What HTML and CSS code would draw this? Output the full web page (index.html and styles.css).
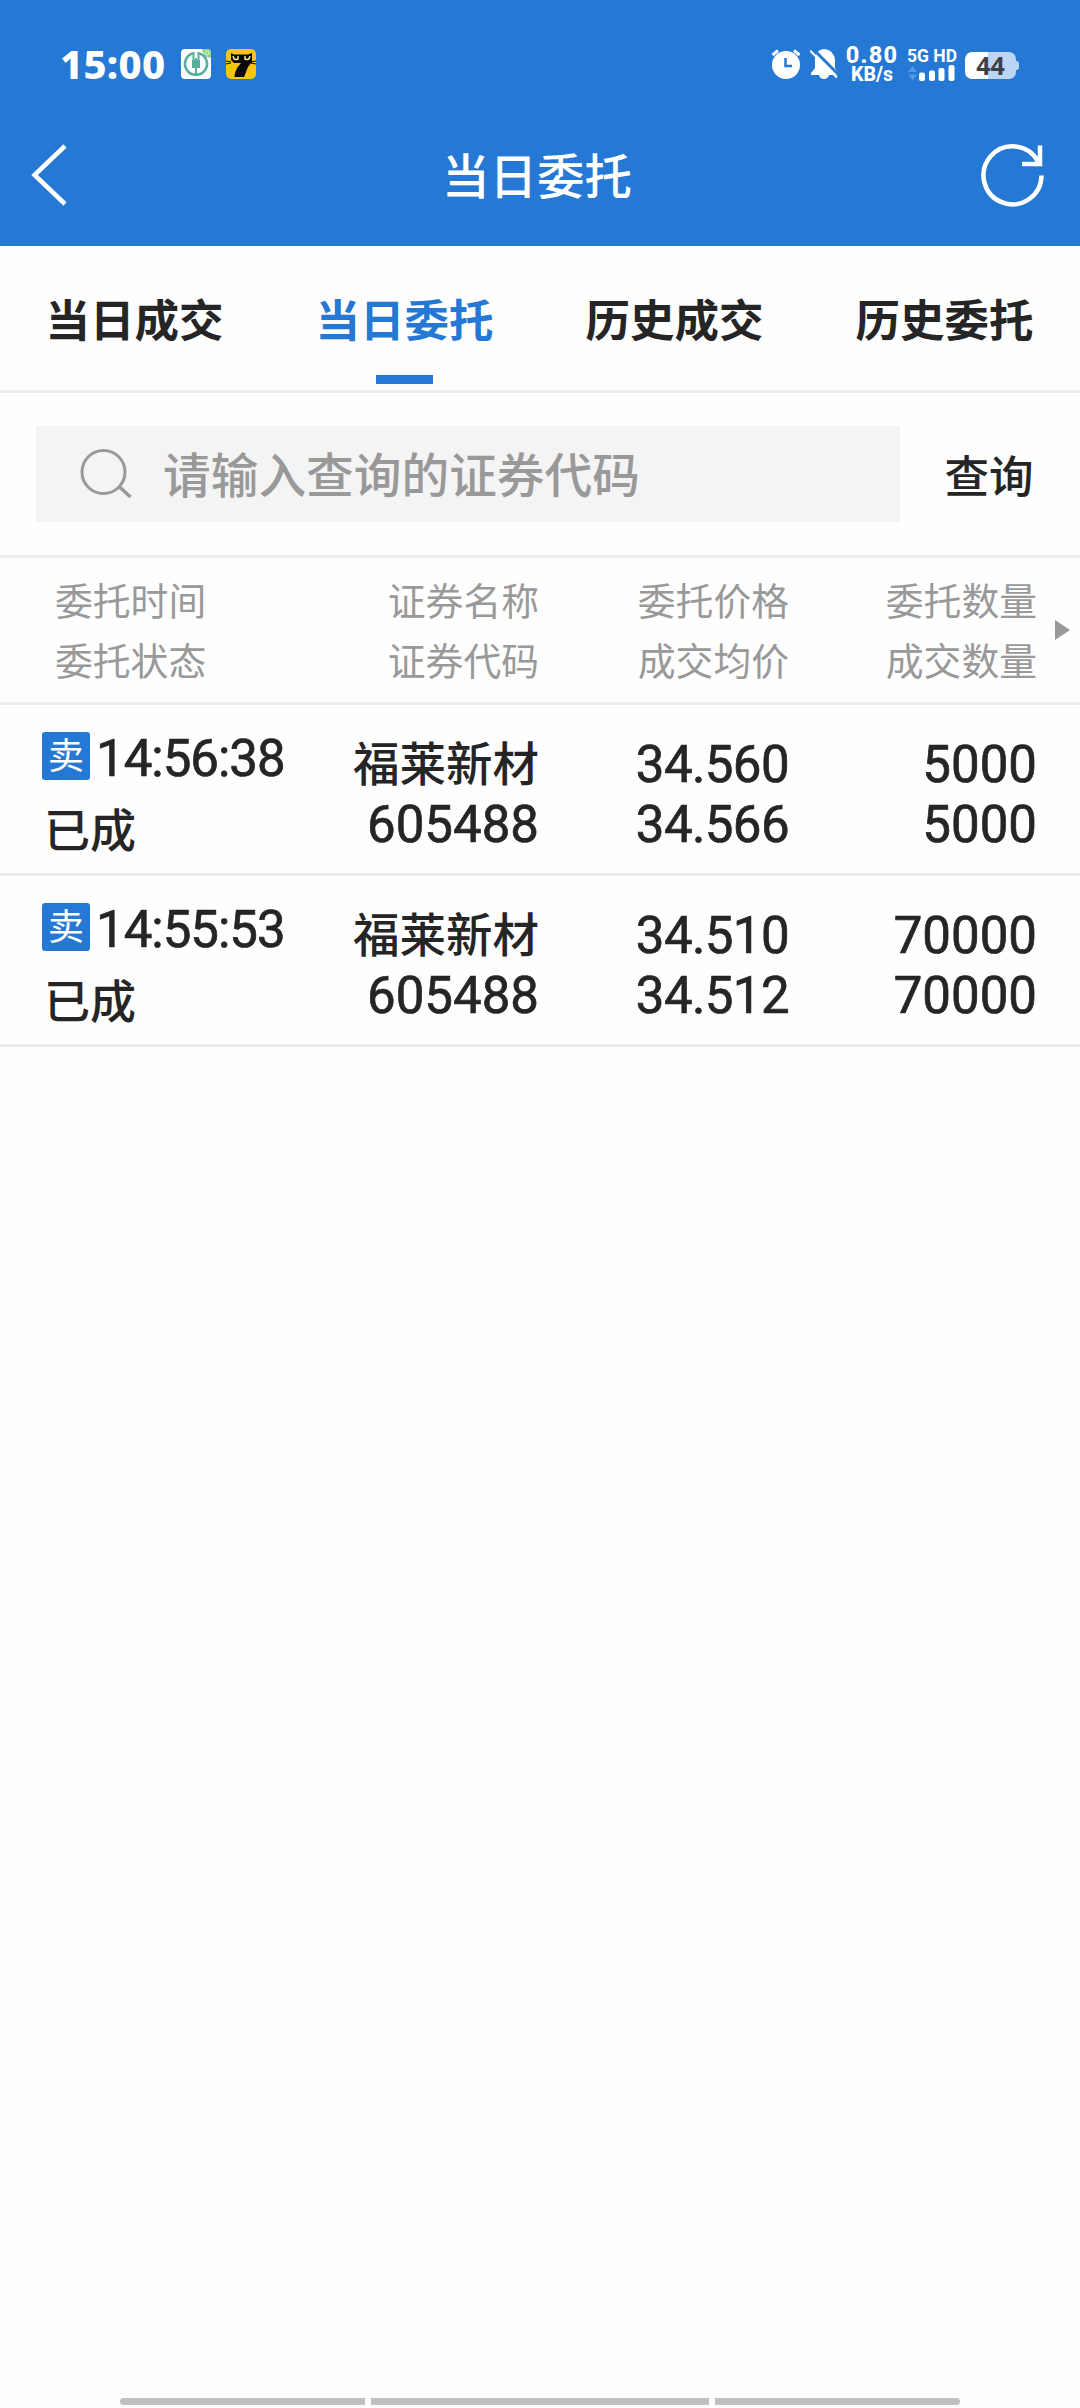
FILE: index.html
```html
<!DOCTYPE html>
<html lang="zh-CN">
<head>
  <meta charset="UTF-8">
  <meta name="viewport" content="width=device-width, initial-scale=1">
  <title>当日委托</title>
  <link rel="stylesheet" href="styles.css">
</head>
<body>

  <header class="header">
    <div class="status-bar">
      <span class="clock">15:00</span>
      <svg class="app-icon" width="30" height="30" viewBox="0 0 30 30">
        <rect width="30" height="30" rx="4" fill="#fff"/>
        <path d="M21 0h5a4 4 0 0 1 4 4v5a9 9 0 0 1-9-9z" fill="#8fd28a"/>
        <circle cx="26" cy="4" r="2" fill="none" stroke="#d8f5b0" stroke-width="1"/>
        <path d="M12 4.300A11 11 0 1 0 18 4.300" fill="none" stroke="#55b09c" stroke-width="2.600"/>
        <path d="M12.500 3v8M17.500 3v8M15 9v18" fill="none" stroke="#55b09c" stroke-width="2"/>
        <rect x="11" y="11" width="8" height="8" fill="#55b09c"/>
      </svg>
      <svg class="app-icon" width="30" height="30" viewBox="0 0 30 30">
        <rect width="30" height="30" rx="5" fill="#f8c70c"/>
        <path d="M5 4l3 1.500h14L26 4v9l-4 5-4 10H8.500q0-7 6.500-14H8l-3-3z" fill="#080808"/>
        <path d="M0 12l5 1M0 15l5-1M30 12l-5 1M30 15l-5-1" stroke="#080808" stroke-width="1"/>
        <path d="M7 7q1 5 5 3V7M24 7q-1 5-5 3V7" fill="none" stroke="#f8e48a" stroke-width="1.500"/>
      </svg>

      <div class="status-right">
        <svg class="alarm" width="30" height="30" viewBox="0 0 30 30">
          <circle cx="15" cy="16" r="14" fill="#fff"/>
          <path d="M1.500 6L7 1.500M28.500 6L23 1.500" stroke="#fff" stroke-width="3"/>
          <path d="M14.500 9v8h6.500" fill="none" stroke="#2578d4" stroke-width="2.500"/>
        </svg>
        <svg class="bell" width="28" height="30" viewBox="0 0 28 30">
          <path d="M5 10q0-9 9-10 10 1 11 11v8l3 5v2h-9q-1 4-5 4t-5-4H1v-2l4-5z" fill="#fff"/>
          <path d="M2 -1L29 26" stroke="#2578d4" stroke-width="3"/>
          <path d="M0 1.500L27 28.500" stroke="#fff" stroke-width="2"/>
        </svg>
        <div class="net-speed">
          <span class="net-value">0.80</span>
          <span class="net-unit">KB/s</span>
        </div>
        <div class="signal">
          <span class="signal-type">5G HD</span>
          <svg width="48" height="16" viewBox="0 0 48 16">
            <path d="M1 7l4.500-6L10 7zM1 9.500h9L5.500 15.500z" fill="#5597e2"/>
            <rect x="12" y="7.500" width="6" height="8.500" rx="2" fill="#fff"/>
            <rect x="22" y="5.500" width="6" height="10.500" rx="2" fill="#fff"/>
            <rect x="31.500" y="3" width="6" height="13" rx="2" fill="#fff"/>
            <rect x="41.500" y="0" width="6" height="16" rx="2" fill="#fff"/>
          </svg>
        </div>
        <div class="battery"><span class="battery-level">44</span></div>
      </div>
    </div>

    <div class="title-bar">
      <svg class="back" width="36" height="62" viewBox="0 0 36 62">
        <path d="M34 2L3.500 31L34 60" fill="none" stroke="#fff" stroke-width="4.500"/>
      </svg>
      <h1 class="title">当日委托</h1>
      <svg class="refresh" width="64" height="64" viewBox="0 0 64 64">
        <path d="M60.500 32.500A29 29 0 1 1 57 18.500" fill="none" stroke="#fff" stroke-width="4.500"/>
        <path d="M59 2.500v18.500H41" fill="none" stroke="#fff" stroke-width="4.500"/>
      </svg>
    </div>
  </header>

  <nav class="tabs">
    <a class="tab">当日成交</a>
    <a class="tab active">当日委托</a>
    <a class="tab">历史成交</a>
    <a class="tab">历史委托</a>
  </nav>

  <div class="search">
    <div class="search-box">
      <svg width="54" height="54" viewBox="0 0 54 54">
        <circle cx="24.500" cy="25" r="21.500" fill="none" stroke="#999" stroke-width="3"/>
        <path d="M40 39.500L51.500 50" stroke="#999" stroke-width="3.500"/>
      </svg>
      <span class="placeholder">请输入查询的证券代码</span>
    </div>
    <span class="search-btn">查询</span>
  </div>

  <div class="orders">
    <div class="order-head">
      <div class="cell first">委托时间<br>委托状态</div>
      <div class="cell">证券名称<br>证券代码</div>
      <div class="cell">委托价格<br>成交均价</div>
      <div class="cell">委托数量<br>成交数量</div>
      <svg class="more" width="15" height="20" viewBox="0 0 15 20">
        <path d="M0 0L15 10L0 20z" fill="#999"/>
      </svg>
    </div>

    <div class="order-row">
      <div class="cell first">
        <div class="time"><span class="sell">卖</span><span class="num">14:56:38</span></div>
        <div class="state">已成</div>
      </div>
      <div class="cell"><span class="name">福莱新材</span><span class="num">605488</span></div>
      <div class="cell amount price"><span class="num">34.560</span><span class="num">34.566</span></div>
      <div class="cell amount"><span class="num">5000</span><span class="num">5000</span></div>
    </div>

    <div class="order-row">
      <div class="cell first">
        <div class="time"><span class="sell">卖</span><span class="num">14:55:53</span></div>
        <div class="state">已成</div>
      </div>
      <div class="cell"><span class="name">福莱新材</span><span class="num">605488</span></div>
      <div class="cell amount price"><span class="num">34.510</span><span class="num">34.512</span></div>
      <div class="cell amount"><span class="num">70000</span><span class="num">70000</span></div>
    </div>
  </div>

  <footer class="nav-hint">
    <i class="hint left"></i>
    <i class="hint middle"></i>
    <i class="hint right"></i>
  </footer>

</body>
</html>
```
FILE: styles.css
```css
* {
  box-sizing: border-box;
}

body {
  margin: 0;
  height: 2408px;
  display: flex;
  flex-direction: column;
  background: #fefefe;
  color: #252525;
  font-family: "Noto Sans", "Noto Sans CJK SC", sans-serif;
  font-weight: 500;
  overflow: hidden;
}

svg {
  display: block;
  flex: none;
}

/* header */
.header {
  height: 246px;
  background: #2578d4;
  color: #fff;
}

.status-bar {
  display: flex;
  align-items: center;
  height: 105px;
  padding: 23px 60px 0 60px;
}

.clock {
  width: 121px;
  font-size: 40px;
  font-weight: 800;
  line-height: 40px;
  letter-spacing: 0.3px;
}

.app-icon {
  margin-right: 15px;
}

.status-right {
  display: flex;
  align-items: center;
  margin-left: auto;
}

.bell {
  margin-left: 9px;
}

.net-speed {
  display: flex;
  flex-direction: column;
  align-items: center;
  width: 54px;
  margin-left: 7px;
  font-family: Roboto, sans-serif;
  font-weight: 800;
}

.net-value {
  font-size: 23.5px;
  line-height: 20px;
  letter-spacing: 1.2px;
}

.net-unit {
  font-size: 19.5px;
  line-height: 19px;
}

.signal {
  width: 48px;
  margin-left: 8px;
}

.signal-type {
  display: block;
  font-family: Roboto, sans-serif;
  font-size: 17.5px;
  font-weight: 700;
  line-height: 18px;
  white-space: nowrap;
}

.battery {
  position: relative;
  width: 51px;
  height: 27px;
  margin: 2px 4px 0 10px;
  border-radius: 7px;
  background: linear-gradient(90deg, #fff 23px, #bcd5f5 23px);
  color: #3d4045;
  text-align: center;
}

.battery::after {
  content: "";
  position: absolute;
  right: -3px;
  top: 9px;
  width: 3px;
  height: 9px;
  border-radius: 0 3px 3px 0;
  background: #bcd5f5;
}

.battery-level {
  display: block;
  font-size: 25px;
  font-weight: 700;
  line-height: 27px;
}

.title-bar {
  display: flex;
  align-items: center;
  justify-content: space-between;
  height: 141px;
  padding: 0 35px 1px 31px;
}

.title {
  margin: 0;
  padding: 2px 2px 0 0;
  font-size: 47.5px;
  font-weight: 500;
  line-height: 60px;
}

.back {
  margin-right: 28px;
}

/* tabs */
.tabs {
  display: flex;
  height: 147px;
  border-bottom: 3px solid #eee;
}

.tab {
  flex: 1;
  display: flex;
  flex-direction: column;
  align-items: center;
  padding: 19px 1px 0 0;
  font-size: 44.5px;
  font-weight: 700;
  line-height: 110px;
}

.tab.active {
  color: #2578d4;
}

.tab.active::after {
  content: "";
  width: 57px;
  height: 9px;
  background: #2578d4;
}

/* search */
.search {
  display: flex;
  align-items: center;
  height: 165px;
  padding-left: 36px;
  border-bottom: 3px solid #eee;
}

.search-box {
  display: flex;
  align-items: center;
  width: 864px;
  height: 96px;
  padding-left: 43px;
  background: #f4f4f4;
}

.placeholder {
  margin-left: 30px;
  padding-top: 2px;
  color: #999;
  font-size: 47.7px;
  line-height: 94px;
}

.search-btn {
  flex: 1;
  padding: 3px 2px 0 0;
  font-size: 44.5px;
  line-height: 93px;
  text-align: center;
}

/* orders */
.order-head,
.order-row {
  display: grid;
  grid-template-columns: 290px 249px 250px 248px 43px;
  border-bottom: 3px solid #eee;
}

.cell {
  text-align: right;
}

.cell.first {
  text-align: left;
}

.order-head {
  height: 147px;
  padding-top: 13px;
  color: #999;
  font-size: 37.8px;
  font-weight: 400;
  line-height: 60px;
}

.order-head .first {
  padding-left: 55px;
}

.more {
  margin: 49px 0 0 18px;
}

.order-row {
  height: 171px;
  padding-top: 27px;
  line-height: 60px;
}

.order-row .cell span {
  display: block;
}

.order-row .first {
  padding-left: 42px;
}

.order-row .num {
  font-family: Roboto, sans-serif;
  font-size: 51px;
  font-weight: 400;
  -webkit-text-stroke: 0.7px #252525;
}

.order-row .amount {
  padding-top: 3px;
}

.order-row .price .num {
  letter-spacing: -0.6px;
}

.time {
  display: flex;
  align-items: center;
  height: 48px;
}

.order-row .time .num {
  padding-top: 5px;
  letter-spacing: -1px;
}

.time .sell {
  width: 48px;
  height: 48px;
  margin-right: 6px;
  border-radius: 3px;
  background: #2578d4;
  color: #fff;
  font-size: 36px;
  font-weight: 400;
  line-height: 47px;
  text-align: center;
}

.state {
  margin: 19px 0 0 2px;
  font-size: 46px;
}

.name {
  font-size: 46.5px;
  line-height: 63px;
}

/* system navigation */
.nav-hint {
  display: flex;
  gap: 6px;
  margin-top: auto;
  padding: 0 120px 3px;
}

.hint {
  height: 7px;
  background: #c1c1c1;
}

.hint.left {
  width: 245px;
  border-radius: 4px 0 0 4px;
}

.hint.middle {
  width: 338px;
}

.hint.right {
  width: 245px;
  border-radius: 0 4px 4px 0;
}
```
